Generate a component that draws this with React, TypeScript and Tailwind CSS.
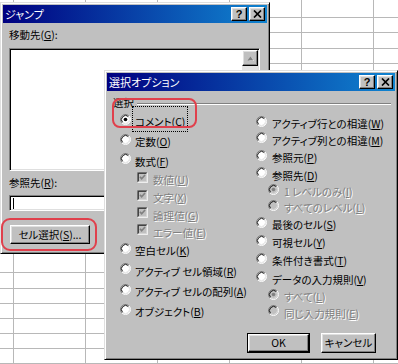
import React from "react";

const rowHeights = [
  "h-[18px]", "h-[15px]", "h-[16px]", "h-[15px]", "h-[15px]", "h-[16px]", "h-[15px]", "h-[15px]",
  "h-[16px]", "h-[15px]", "h-[15px]", "h-[16px]", "h-[15px]", "h-[15px]", "h-[16px]", "h-[15px]",
  "h-[25px]", "h-[16px]", "h-[15px]", "h-[15px]", "h-[15px]", "h-[15px]", "h-[15px]",
];

function Grid() {
  return (
    <div className="flex flex-col">
      {rowHeights.map((h, i) => (
        <div key={i} className={`flex shrink-0 border-b border-[#b8b8b8] ${h}`}>
          <div className="w-[14px] shrink-0 border-r border-[#b8b8b8]" />
          <div className="w-[72px] shrink-0 border-r border-[#b8b8b8]" />
          <div className="w-[72px] shrink-0 border-r border-[#b8b8b8]" />
          <div className="w-[72px] shrink-0 border-r border-[#b8b8b8]" />
          <div className="w-[72px] shrink-0 border-r border-[#b8b8b8]" />
          <div className="w-[72px] shrink-0 border-r border-[#b8b8b8]" />
          <div className="w-[72px] shrink-0 border-r border-[#b8b8b8]" />
        </div>
      ))}
    </div>
  );
}

function Radio({ checked, disabled }: { checked?: boolean; disabled?: boolean }) {
  return (
    <svg width="11" height="11" viewBox="0 0 12 12" className="shrink-0">
      <circle cx="6" cy="6" r="5" fill={disabled ? "#c0c0c0" : "#fff"} />
      <path d="M2.11 9.89A5.5 5.5 0 0 1 9.89 2.11" stroke="#808080" fill="none" />
      <path d="M9.89 2.11A5.5 5.5 0 0 1 2.11 9.89" stroke="#fff" fill="none" />
      <path d="M2.82 9.18A4.5 4.5 0 0 1 9.18 2.82" stroke="#000" fill="none" />
      <path d="M9.18 2.82A4.5 4.5 0 0 1 2.82 9.18" stroke="#dfdfdf" fill="none" />
      {checked && <circle cx="6" cy="6" r="2" fill={disabled ? "#808080" : "#000"} />}
    </svg>
  );
}

function CheckBox() {
  return (
    <svg width="11" height="11" viewBox="0 0 13 13" className="shrink-0">
      <rect x="0" y="0" width="13" height="13" fill="#c0c0c0" />
      <path d="M0.5 12.5V0.5H12.5" stroke="#808080" fill="none" />
      <path d="M1.5 11.5V1.5H11.5" stroke="#000" fill="none" />
      <path d="M0.5 12.5H12.5V0.5" stroke="#fff" fill="none" />
      <path d="M1.5 11.5H11.5V1.5" stroke="#dfdfdf" fill="none" />
      <polyline points="3.5,5.5 5.5,8 9.5,3.5" stroke="#808080" strokeWidth="2" fill="none" />
    </svg>
  );
}

function TitleButtons() {
  return (
    <div className="flex items-center gap-[2px] pr-[2px]">
      <div className="flex h-[14px] w-[16px] items-center justify-center border border-b-black border-l-white border-r-black border-t-white bg-[#c0c0c0] shadow-[inset_-1px_-1px_0_#808080,inset_1px_1px_0_#dfdfdf]">
        <span className="text-[11px] font-bold leading-[11px] text-black [font-family:'Liberation_Sans',sans-serif]">?</span>
      </div>
      <div className="flex h-[14px] w-[16px] items-center justify-center border border-b-black border-l-white border-r-black border-t-white bg-[#c0c0c0] shadow-[inset_-1px_-1px_0_#808080,inset_1px_1px_0_#dfdfdf]">
        <svg width="9" height="8" viewBox="0 0 9 8">
          <path d="M1 0.5L8 7.5M8 0.5L1 7.5" stroke="#000" strokeWidth="1.7" />
        </svg>
      </div>
    </div>
  );
}

function TitleBar({ title }: { title: string }) {
  return (
    <div className="flex h-[18px] shrink-0 items-center justify-between bg-[linear-gradient(90deg,#000080,#1084d0)]">
      <span className="pl-[2px] text-[11px] leading-[18px] text-white">{title}</span>
      <TitleButtons />
    </div>
  );
}

const frame =
  "absolute flex flex-col border border-b-black border-l-[#dfdfdf] border-r-black border-t-[#dfdfdf] bg-[#c0c0c0] p-[2px] shadow-[inset_1px_1px_0_#fff,inset_-1px_-1px_0_#808080]";

const sunken =
  "border border-b-white border-l-[#808080] border-r-white border-t-[#808080] shadow-[inset_1px_1px_0_#000,inset_-1px_-1px_0_#dfdfdf]";

const raised =
  "border border-b-black border-l-white border-r-black border-t-white bg-[#c0c0c0] shadow-[inset_-1px_-1px_0_#808080,inset_1px_1px_0_#dfdfdf]";

function JumpDialog() {
  return (
    <div className={`${frame} left-0 top-[2px] h-[252px] w-[270px]`}>
      <TitleBar title="ジャンプ" />
      <div className="flex flex-col px-[6px]">
        <div className="mt-[6px] h-[12px] text-[10.5px] leading-[12px]">
          移動先(<u>G</u>):
        </div>
        <div className={`${sunken} mt-[7px] flex h-[123px] w-[251px] bg-white p-[1px]`}>
          <div className="flex-1" />
          <div className="flex w-[16px] flex-col">
            <div className={`${raised} flex h-[16px] items-center justify-center`}>
              <svg width="9" height="6" viewBox="0 0 9 6">
                <path d="M1.5 5.5L4.5 1.5L7.5 5.5Z" fill="#fff" transform="translate(1 1)" />
                <path d="M1.5 5.5L4.5 1.5L7.5 5.5Z" fill="#808080" />
              </svg>
            </div>
            <div className="flex-1 bg-[#e4e4e4]" />
          </div>
        </div>
        <div className="mt-[6px] h-[12px] text-[10.5px] leading-[12px]">
          参照先(<u>R</u>):
        </div>
        <div className={`${sunken} mt-[6px] flex h-[16px] w-[251px] items-center bg-white pl-[3px]`}>
          <div className="h-[11px] w-px bg-black" />
        </div>
        <div className={`${raised} ml-[1px] mt-[14px] flex h-[19px] w-[80px] items-center justify-center text-[10.5px]`}>
          セル選択(<u>S</u>)...
        </div>
      </div>
    </div>
  );
}

function Row({ h, children, pl }: { h: string; children: React.ReactNode; pl?: string }) {
  return <div className={`flex items-center ${h} ${pl ?? ""}`}>{children}</div>;
}

function Label({ children, disabled }: { children: React.ReactNode; disabled?: boolean }) {
  return (
    <span
      className={
        disabled
          ? "whitespace-nowrap text-[10.5px] leading-[12px] text-[#808080] [text-shadow:1px_1px_0_#fff]"
          : "whitespace-nowrap text-[10.5px] leading-[12px] text-black"
      }
    >
      {children}
    </span>
  );
}

function OptionsDialog() {
  return (
    <div className={`${frame} left-[104px] top-[70px] h-[290px] w-[294px]`}>
      <TitleBar title="選択オプション" />
      <div className="flex flex-1 flex-col">
        <div className="mt-[6px] flex h-[12px] items-center pl-[6px] pr-[4px]">
          <span className="text-[10.5px] leading-[12px]">選択</span>
          <div className="ml-[3px] mt-[2px] h-[2px] flex-1 border-b border-t border-b-white border-t-[#808080]" />
        </div>
        <div className="flex pl-[13px]">
          <div className="flex w-[136px] flex-col">
            <Row h="h-[20px]">
              <Radio checked />
              <span className="ml-[1px] border border-dotted border-black px-[2px]">
                <Label>コメント(<u>C</u>)</Label>
              </span>
            </Row>
            <Row h="h-[20px]">
              <Radio />
              <span className="ml-[4px]"><Label>定数(<u>O</u>)</Label></span>
            </Row>
            <Row h="h-[19px]">
              <Radio />
              <span className="ml-[4px]"><Label>数式(<u>F</u>)</Label></span>
            </Row>
            <Row h="h-[18px]" pl="pl-[17px]">
              <CheckBox />
              <span className="ml-[5px]"><Label disabled>数値(<u>U</u>)</Label></span>
            </Row>
            <Row h="h-[18px]" pl="pl-[17px]">
              <CheckBox />
              <span className="ml-[5px]"><Label disabled>文字(<u>X</u>)</Label></span>
            </Row>
            <Row h="h-[17px]" pl="pl-[17px]">
              <CheckBox />
              <span className="ml-[5px]"><Label disabled>論理値(<u>G</u>)</Label></span>
            </Row>
            <Row h="h-[17px]" pl="pl-[17px]">
              <CheckBox />
              <span className="ml-[5px]"><Label disabled>エラー値(<u>E</u>)</Label></span>
            </Row>
            <Row h="h-[20px]">
              <Radio />
              <span className="ml-[4px]"><Label>空白セル(<u>K</u>)</Label></span>
            </Row>
            <Row h="h-[21px]">
              <Radio />
              <span className="ml-[4px]"><Label>アクティブ セル領域(<u>R</u>)</Label></span>
            </Row>
            <Row h="h-[20px]">
              <Radio />
              <span className="ml-[4px]"><Label>アクティブ セルの配列(<u>A</u>)</Label></span>
            </Row>
            <Row h="h-[20px]">
              <Radio />
              <span className="ml-[4px]"><Label>オブジェクト(<u>B</u>)</Label></span>
            </Row>
          </div>
          <div className="mt-[4px] flex flex-col">
            <Row h="h-[16px]">
              <Radio />
              <span className="ml-[5px]"><Label>アクティブ行との相違(<u>W</u>)</Label></span>
            </Row>
            <Row h="h-[17px]">
              <Radio />
              <span className="ml-[5px]"><Label>アクティブ列との相違(<u>M</u>)</Label></span>
            </Row>
            <Row h="h-[18px]">
              <Radio />
              <span className="ml-[5px]"><Label>参照元(<u>P</u>)</Label></span>
            </Row>
            <Row h="h-[17px]">
              <Radio />
              <span className="ml-[5px]"><Label>参照先(<u>D</u>)</Label></span>
            </Row>
            <Row h="h-[16px]" pl="pl-[12px]">
              <Radio checked disabled />
              <span className="ml-[5px]"><Label disabled>1 レベルのみ(<u>I</u>)</Label></span>
            </Row>
            <Row h="h-[16px]" pl="pl-[12px]">
              <Radio disabled />
              <span className="ml-[5px]"><Label disabled>すべてのレベル(<u>L</u>)</Label></span>
            </Row>
            <Row h="h-[18px]">
              <Radio />
              <span className="ml-[5px]"><Label>最後のセル(<u>S</u>)</Label></span>
            </Row>
            <Row h="h-[18px]">
              <Radio />
              <span className="ml-[5px]"><Label>可視セル(<u>Y</u>)</Label></span>
            </Row>
            <Row h="h-[18px]">
              <Radio />
              <span className="ml-[5px]"><Label>条件付き書式(<u>T</u>)</Label></span>
            </Row>
            <Row h="h-[19px]">
              <Radio />
              <span className="ml-[5px]"><Label>データの入力規則(<u>V</u>)</Label></span>
            </Row>
            <Row h="h-[16px]" pl="pl-[12px]">
              <Radio checked disabled />
              <span className="ml-[5px]"><Label disabled>すべて(<u>L</u>)</Label></span>
            </Row>
            <Row h="h-[17px]" pl="pl-[12px]">
              <Radio disabled />
              <span className="ml-[5px]"><Label disabled>同じ入力規則(<u>E</u>)</Label></span>
            </Row>
          </div>
        </div>
        <div className="mt-auto flex justify-end gap-[11px] pb-[4px] pr-[19px]">
          <div className="h-[20px] w-[63px] border border-black">
            <div className={`${raised} flex h-full w-full items-center justify-center text-[10.5px]`}>OK</div>
          </div>
          <div className={`${raised} flex h-[20px] w-[55px] items-center justify-center text-[10.5px]`}>キャンセル</div>
        </div>
      </div>
    </div>
  );
}

export default function App() {
  return (
    <div className="relative h-[364px] w-[398px] overflow-hidden bg-white text-black [font-family:'Noto_Sans_CJK_JP','Noto_Sans',sans-serif] [font-feature-settings:'palt']">
      <Grid />
      <JumpDialog />
      <OptionsDialog />
      <div className="pointer-events-none absolute left-[1px] top-[218px] h-[33px] w-[96px] rounded-[9px] border-2 border-[#e0404c]" />
      <div className="pointer-events-none absolute left-[112px] top-[98px] h-[30px] w-[85px] rounded-[8px] border-2 border-[#e0404c]" />
    </div>
  );
}
